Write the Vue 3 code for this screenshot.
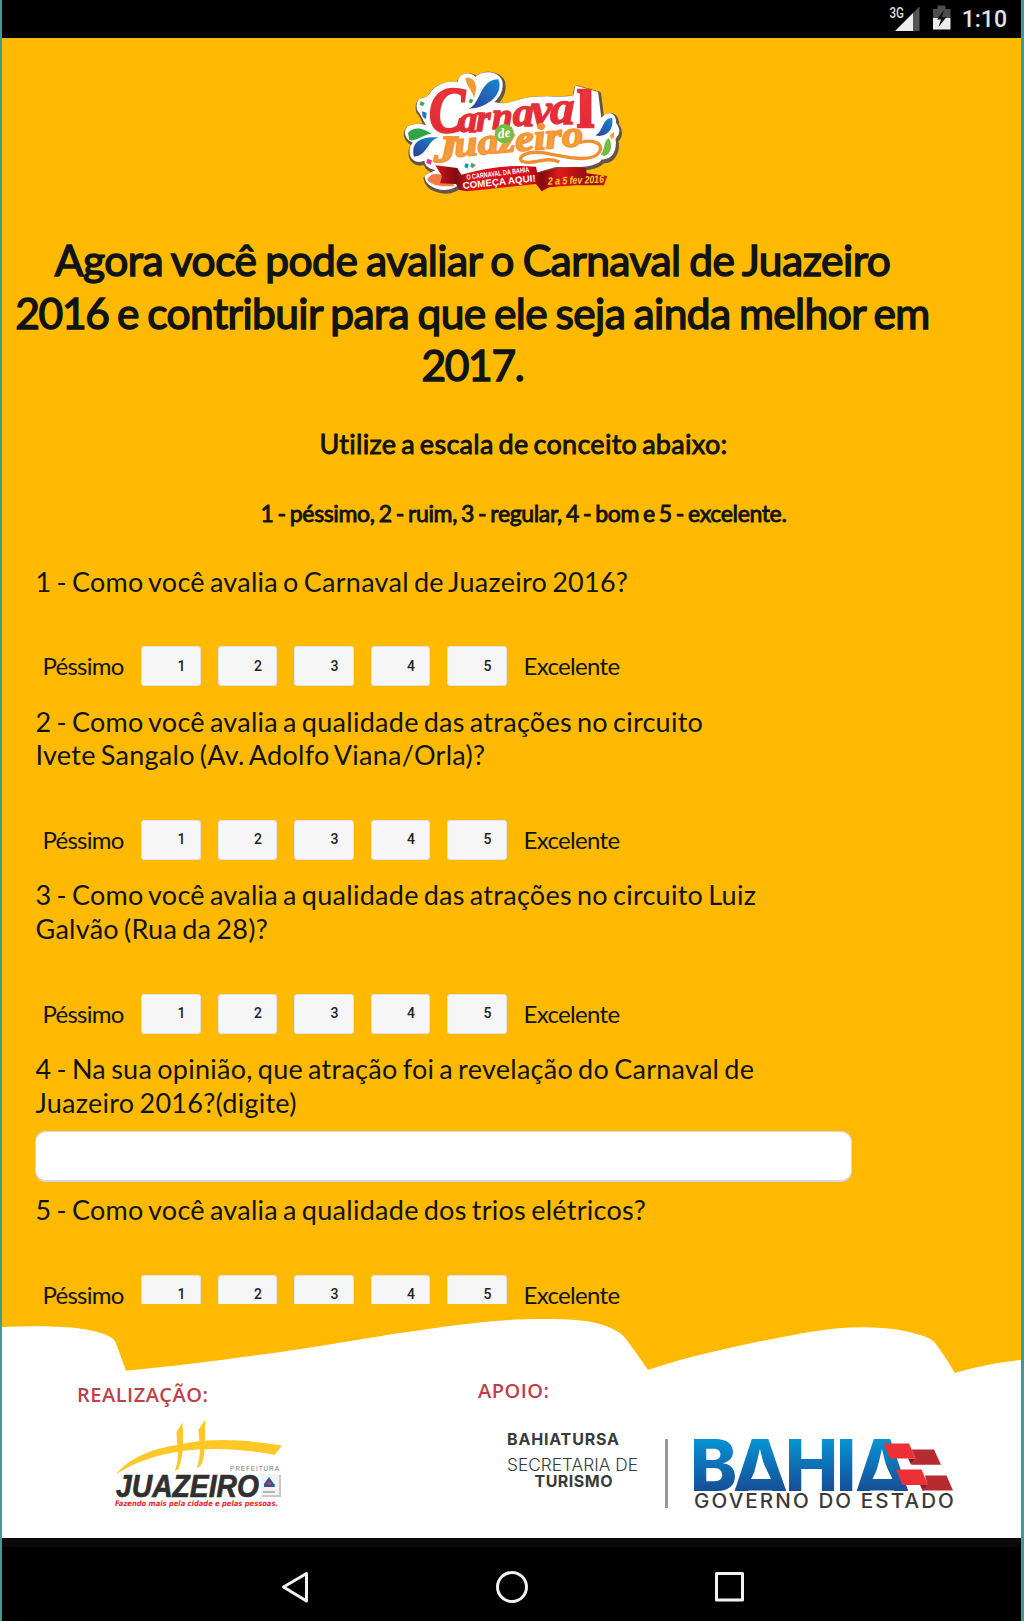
<script setup>
const choices = [1, 2, 3, 4, 5]
const questions = [
  { id: 1, kind: 'scale', lines: ['1 - Como você avalia o Carnaval de Juazeiro 2016?'] },
  { id: 2, kind: 'scale', lines: ['2 - Como você avalia a qualidade das atrações no circuito', 'Ivete Sangalo (Av. Adolfo Viana/Orla)?'] },
  { id: 3, kind: 'scale', lines: ['3 - Como você avalia a qualidade das atrações no circuito Luiz', 'Galvão (Rua da 28)?'] },
  { id: 4, kind: 'text', lines: ['4 - Na sua opinião, que atração foi a revelação do Carnaval de', 'Juazeiro 2016?(digite)'] },
  { id: 5, kind: 'scale', lines: ['5 - Como você avalia a qualidade dos trios elétricos?'] },
]
</script>

<template>
  <div class="device">
    <header class="status">
      <svg class="status-icons" width="64" height="38" viewBox="889 0 64 38">
        <text x="889.5" y="17.500" font-size="14" font-weight="500" textLength="14.500" lengthAdjust="spacingAndGlyphs" fill="#ddd">3G</text>
        <path d="M895 31L913 13V31Z" fill="#ececec" />
        <path d="M913 13L919.500 6.500V31H913Z" fill="#555" />
        <path d="M933 9h4.500V5.500h8V9h5v9h-17.500z" fill="#4d4d4d" />
        <path d="M933 18h17.500v11.500H933z" fill="#ececec" />
        <path d="M944 10l-7 9.500h4l-2.500 7.500 8-10h-4.500z" fill="#111" />
      </svg>
      <span class="clock">1:10</span>
    </header>

    <main class="page">
      <svg class="logo" width="250" height="140" viewBox="0 0 750 420">
        <defs>
          <linearGradient id="red" x1="0" y1="0" x2="0" y2="1"><stop offset="0" stop-color="#ee3a3c" /><stop offset="1" stop-color="#df2534" /></linearGradient>
          <linearGradient id="orange" x1="0" y1="0" x2="0" y2="1"><stop offset="0" stop-color="#f08a2c" /><stop offset="1" stop-color="#f8ab48" /></linearGradient>
          <linearGradient id="blue" x1="1" y1="0" x2="0" y2="1"><stop offset="0" stop-color="#1689cf" /><stop offset="1" stop-color="#2b3f9b" /></linearGradient>
          <linearGradient id="ribbon" x1="0" y1="0" x2="1" y2="0"><stop offset="0" stop-color="#d8141c" /><stop offset=".12" stop-color="#7c0c10" /><stop offset=".2" stop-color="#dd1118" /><stop offset=".55" stop-color="#d50f18" /><stop offset=".62" stop-color="#85090f" /><stop offset=".72" stop-color="#e01a1c" /><stop offset=".9" stop-color="#8e0c12" /><stop offset="1" stop-color="#cf1a1a" /></linearGradient>
          <path id="blob" d="M92 118C104 112 110 118 118 106C135 76 168 64 205 68C208 42 236 34 256 54C278 32 322 34 334 62C340 88 326 112 308 128C350 140 372 124 400 118C450 104 520 118 552 108L558 80L622 98L632 178C660 150 676 164 676 190C690 210 688 222 674 236C680 272 664 298 634 296C622 318 560 322 500 318L420 340L230 360L190 382C160 396 110 382 106 350C118 336 138 338 140 328C108 324 104 306 106 298C78 312 56 296 62 262L72 246C48 240 40 214 54 202C78 188 106 194 118 204C100 184 96 160 84 150C80 134 82 124 92 118Z" />
        </defs>
        <use href="#blob" transform="translate(3 5)" fill="#665447" stroke="#665447" stroke-width="17" stroke-linejoin="round" />
        <use href="#blob" fill="#fff" stroke="#fff" stroke-width="5" stroke-linejoin="round" />
        <path d="M226 54C250 50 268 70 252 115C248 90 230 82 226 54Z" fill="#f39a35" />
        <path d="M325 58C342 96 300 144 238 146C272 130 270 58 325 58Z" fill="url(#blue)" />
        <path d="M240 116l10 4-5 10-9-3z" fill="#30a84b" />
        <path d="M92 124l12 5-5 9-10-3z" fill="#30a84b" />
        <path d="M96 154l14 4-2 20-10-8z" fill="#2374b8" />
        <path d="M54 218C76 196 106 208 124 222C106 220 82 244 58 240Z" fill="#2fa545" />
        <path d="M72 290C62 248 88 228 148 232C112 238 114 288 72 290Z" fill="url(#blue)" />
        <path d="M112 296l14 5-4 14-13-7z" fill="#e2369b" />
        <path d="M666 174C674 214 642 234 616 226C640 216 636 174 666 174Z" fill="url(#blue)" />
        <path d="M672 216l-12 8 3 14 9-6z" fill="#f4a235" />
        <path d="M656 234C668 252 666 280 644 288L632 284C646 268 638 248 656 234Z" fill="#72bd41" />
        <path d="M226 310l10 3-3 13-10-5z" fill="#1698b8" /><path d="M244 308l13 6-8 10-8-4z" fill="#49a749" />
        <g font-family="Liberation Serif" font-weight="700" font-style="italic">
          <text x="117" y="216" font-size="194" textLength="108" lengthAdjust="spacingAndGlyphs" fill="url(#red)" stroke="#e63038" stroke-width="7">C</text>
          <text x="206 258 306 368 424 480" y="217 214 208 198 196 193" fill="url(#red)" stroke="#e63038" stroke-width="4"><tspan font-size="112">arn</tspan><tspan font-size="128">a</tspan><tspan font-size="140">v</tspan><tspan font-size="148">a</tspan></text>
          <text x="562" y="202" font-size="158" textLength="50" font-style="normal" lengthAdjust="spacingAndGlyphs" fill="url(#red)" stroke="#e63038" stroke-width="8">l</text>
          <text x="133" y="306" font-size="112" textLength="68" lengthAdjust="spacingAndGlyphs" fill="url(#orange)" stroke="#f39735" stroke-width="6">J</text>
          <text x="195" y="290" font-size="110" transform="rotate(-5 195 290)" textLength="388" lengthAdjust="spacingAndGlyphs" fill="url(#orange)" stroke="#f39735" stroke-width="5">uazeiro</text>
        </g>
        <path d="M568 248C602 238 644 246 628 276C606 314 512 286 456 278C412 272 380 290 396 304C430 318 464 286 508 306" fill="none" stroke="#f18e2e" stroke-width="10" />
        <circle cx="343" cy="221" r="29" fill="#78bd43" />
        <text x="324" y="233" font-family="Liberation Serif" font-style="italic" font-weight="700" font-size="42" textLength="38" lengthAdjust="spacingAndGlyphs" fill="#fff" transform="rotate(-8 342 222)">de</text>
        <path d="M124 344C146 336 190 350 192 378C160 382 112 374 112 356Z" fill="#f27b43" />
        <path d="M136 316L202 324L214 344Q330 310 438 320L442 340Q520 314 588 324L590 340L652 348L642 376L592 376L558 376L478 382L455 394L438 372Q320 384 230 394L208 390L198 372L150 370L156 348Z" fill="url(#ribbon)" />
        <g fill="#fff" font-family="Liberation Sans" font-weight="700">
          <text x="230" y="359" font-size="22" textLength="190" lengthAdjust="spacingAndGlyphs" transform="rotate(-7 230 359)">O CARNAVAL DA BAHIA</text>
          <text x="219" y="387" font-size="29" textLength="220" lengthAdjust="spacingAndGlyphs" transform="rotate(-6 219 387)">COMEÇA AQUI!</text>
        </g>
        <text x="474" y="374" font-family="Liberation Sans" font-weight="700" font-style="italic" font-size="32" textLength="168" lengthAdjust="spacingAndGlyphs" transform="rotate(-2 474 372)" fill="#ffd11d">2 a 5 fev 2016</text>
      </svg>

      <h1>
        <span class="row-a">Agora você pode avaliar o Carnaval de Juazeiro</span>
        <span class="row-b"><span class="year">2016</span> e contribuir para que ele seja ainda melhor em</span>
        <span class="year">2017.</span>
      </h1>
      <h2>Utilize a escala de conceito abaixo:</h2>
      <h3>1 - péssimo, 2 - ruim, 3 - regular, 4 - bom e 5 - excelente.</h3>

      <section v-for="q in questions" :key="q.id" class="question">
        <p v-for="line in q.lines" :key="line">{{ line }}</p>
        <div v-if="q.kind === 'scale'" class="scale">
          <span class="low">Péssimo</span>
          <div class="choices">
            <button v-for="n in choices" :key="n">{{ n }}</button>
          </div>
          <span class="high">Excelente</span>
        </div>
        <input v-else type="text">
      </section>
    </main>

    <footer class="sponsors">
      <svg width="1019" height="234" viewBox="2 1304 1019 234">
        <defs>
          <linearGradient id="bahia" gradientUnits="userSpaceOnUse" x1="0" y1="1440" x2="0" y2="1490"><stop offset="0" stop-color="#0792d2" /><stop offset="1" stop-color="#164f98" /></linearGradient>
        </defs>
        <path fill="#fff" d="M2 1327C30 1326 50 1326 62 1327C88 1328 112 1334 115.500 1342L126 1370.700C180 1366 235 1358 281 1352C340 1343 380 1336 400 1333C450 1326 490 1319 543 1319C575 1319 590 1321 600 1324C612 1328 621 1332 626 1339Q638 1355 648 1370Q680 1359 713 1351.700Q790 1334 833 1328.700Q875 1325 905 1331C922 1335 932 1338 936 1344Q946 1358 955 1373Q985 1364 1021 1360V1538H2Z" />
        <g fill="#bf4148" font-family="Open Sans" font-weight="600" font-size="20">
          <text x="77" y="1402" textLength="131">REALIZAÇÃO:</text>
          <text x="478" y="1398" textLength="71">APOIO:</text>
        </g>
        <g fill="#fec927">
          <path d="M116 1474.500C128 1459 150 1449 177 1445C210 1437 247 1440 282 1445.500L274.500 1455C245 1449 210 1447 182 1451C155 1455 133 1463 116 1474.500Z" />
          <path d="M176.500 1432L182.500 1422.500C184 1440 183 1459 178.500 1469L175 1471Q180 1455 177 1442Z" />
          <path d="M198.300 1430L205 1420C205 1440 206 1458 200.500 1466L197 1468Q202 1450 199 1438Z" />
        </g>
        <text x="230" y="1470.500" font-family="Liberation Sans" font-size="6.500" fill="#777" textLength="49">PREFEITURA</text>
        <rect x="262" y="1475" width="19" height="22" fill="#c9c9c9" /><rect x="261" y="1474" width="18" height="21" fill="#f1f3f3" />
        <path d="M264 1487h11v-3h-11z" fill="#4ca66c" /><path d="M264 1484l5-7 5 7v3h-10z" fill="#2458a5" /><path d="M268 1482h3v3h-3z" fill="#d93e38" /><path d="M263 1492h12" stroke="#777" />
        <text x="116" y="1496.500" font-family="Liberation Sans" font-style="italic" font-weight="700" font-size="32" textLength="143" lengthAdjust="spacingAndGlyphs" fill="#303030" stroke="#303030" stroke-width=".7">JUAZEIRO</text>
        <text x="115" y="1506" font-family="DejaVu Sans" font-weight="700" font-style="italic" font-size="7.500" textLength="163" lengthAdjust="spacingAndGlyphs" fill="#ee1f2c">Fazendo mais pela cidade e pelas pessoas.</text>
        <g font-family="Inter" fill="#3a3a3a">
          <text x="507" y="1444.500" font-size="16" font-weight="700" textLength="112">BAHIATURSA</text>
          <text x="507" y="1471" font-size="17" font-weight="300" textLength="131" lengthAdjust="spacingAndGlyphs">SECRETARIA DE</text>
          <text x="534.500" y="1486.500" font-size="16" font-weight="700" textLength="78">TURISMO</text>
          <text x="694" y="1508" font-size="19.500" font-weight="500" letter-spacing="2" textLength="262" lengthAdjust="spacingAndGlyphs">GOVERNO DO ESTADO</text>
        </g>
        <path d="M666.500 1439V1508" stroke="#999" stroke-width="3" />
        <text x="690 733 785 836 855" y="1490.500" font-family="Inter" font-size="71" font-weight="800" fill="url(#bahia)">BAHIA</text>
        <g fill="url(#bahia)">
          <path d="M742 1474H780L786 1490.500H736Z" /><path d="M864 1474H902L908 1490.500H858Z" />
        </g>
        <path d="M761 1458L771 1479H751ZM882.500 1458L892.500 1479H872.500Z" fill="#fff" />
        <path d="M908 1458.500h8l-5 6zM920 1485h8l-5 6z" fill="#7e2026" />
        <path d="M911.500 1449.500H934L941 1464.700H911L915.500 1458.500ZM925 1475.500H946.500L953 1490.500H922L927.500 1485Z" fill="#b52b30" />
        <path d="M883.500 1443.500H909L915.500 1458.500H890ZM896 1469.500H921.500L928 1485H902.500Z" fill="#ee2f35" />
      </svg>
    </footer>

    <nav class="nav">
      <svg width="1019" height="83" viewBox="2 1538 1019 83" fill="none" stroke="#f2f2f2" stroke-width="3" stroke-linejoin="round">
        <path d="M283.500 1587L306.500 1573.500V1601Z" />
        <circle cx="512" cy="1587" r="14.500" />
        <rect x="716.500" y="1573.500" width="26" height="26.500" />
      </svg>
    </nav>
  </div>
</template>

<style>
body { margin: 0; }
</style>

<style scoped>
.device {
  box-sizing: border-box;
  width: 1024px;
  height: 1621px;
  display: flex;
  flex-direction: column;
  border-left: 2px solid #3f9c92;
  border-right: 3px solid #3f9c92;
  background: #ffba00;
  color: #101417;
  font-family: Lato, sans-serif;
}
.status {
  height: 38px;
  flex: none;
  display: flex;
  justify-content: flex-end;
  align-items: center;
  gap: 9px;
  padding-right: 14px;
  background: #000;
  color: #e4e4e4;
  font-family: Roboto, sans-serif;
}
.clock { font-size: 23px; font-weight: 500; line-height: 39px; }
.page { height: 1266px; flex: none; overflow: hidden; display: flex; flex-direction: column; align-items: flex-start; }
.logo { flex: none; margin: 22px 0 0 388px; }
h1 {
  width: 941px;
  margin: 34px 0 0;
  display: flex;
  flex-direction: column;
  align-items: center;
  font-size: 42.500px;
  line-height: 52.700px;
  font-weight: 400;
  white-space: nowrap;
  -webkit-text-stroke: 1.500px #101417;
}
.row-a { letter-spacing: -.5px; word-spacing: -1.700px; }
.row-b { letter-spacing: -.6px; word-spacing: -1.900px; }
.year { letter-spacing: -1.300px; }
h2, h3 { width: 1043px; margin: 0; text-align: center; font-weight: 400; white-space: nowrap; -webkit-text-stroke: .9px #101417; }
h2 { margin-top: 36px; font-size: 27px; line-height: 32px; letter-spacing: .3px; word-spacing: -2.300px; }
h3 { margin-top: 38px; font-size: 23px; line-height: 30px; letter-spacing: -.35px; word-spacing: -1.500px; }
.question { margin-left: 33.500px; }
h3 + .question { margin-top: 36.600px; }
p { margin: 0; font-size: 27px; line-height: 33.600px; letter-spacing: .27px; word-spacing: -2.100px; white-space: nowrap; }
.scale { height: 58.500px; padding-top: 48px; display: flex; align-items: flex-start; font-size: 24px; line-height: 40px; letter-spacing: -.75px; }
.low { width: 98.500px; padding-left: 7px; }
.choices { display: flex; gap: 17px; }
button {
  box-sizing: border-box;
  width: 59.500px;
  height: 40px;
  padding: 0 14px 1px 0;
  border: 1px solid #dfe2ea;
  border-radius: 3px;
  background: #f6f6f6;
  color: #222;
  font: 500 14px Roboto, sans-serif;
  text-align: right;
}
.high { padding-left: 17px; letter-spacing: -.67px; }
input { box-sizing: border-box; display: block; width: 817px; height: 51px; margin: 12px 0 11px -1px; border: 1px solid #d5d8e2; border-bottom-width: 2px; border-radius: 11px; background: #fff; }
.sponsors { height: 234px; flex: none; }
.sponsors svg, .nav svg { display: block; }
.nav { height: 83px; flex: none; background: linear-gradient(#0a0a0a 9px, #000 9px); }
</style>
